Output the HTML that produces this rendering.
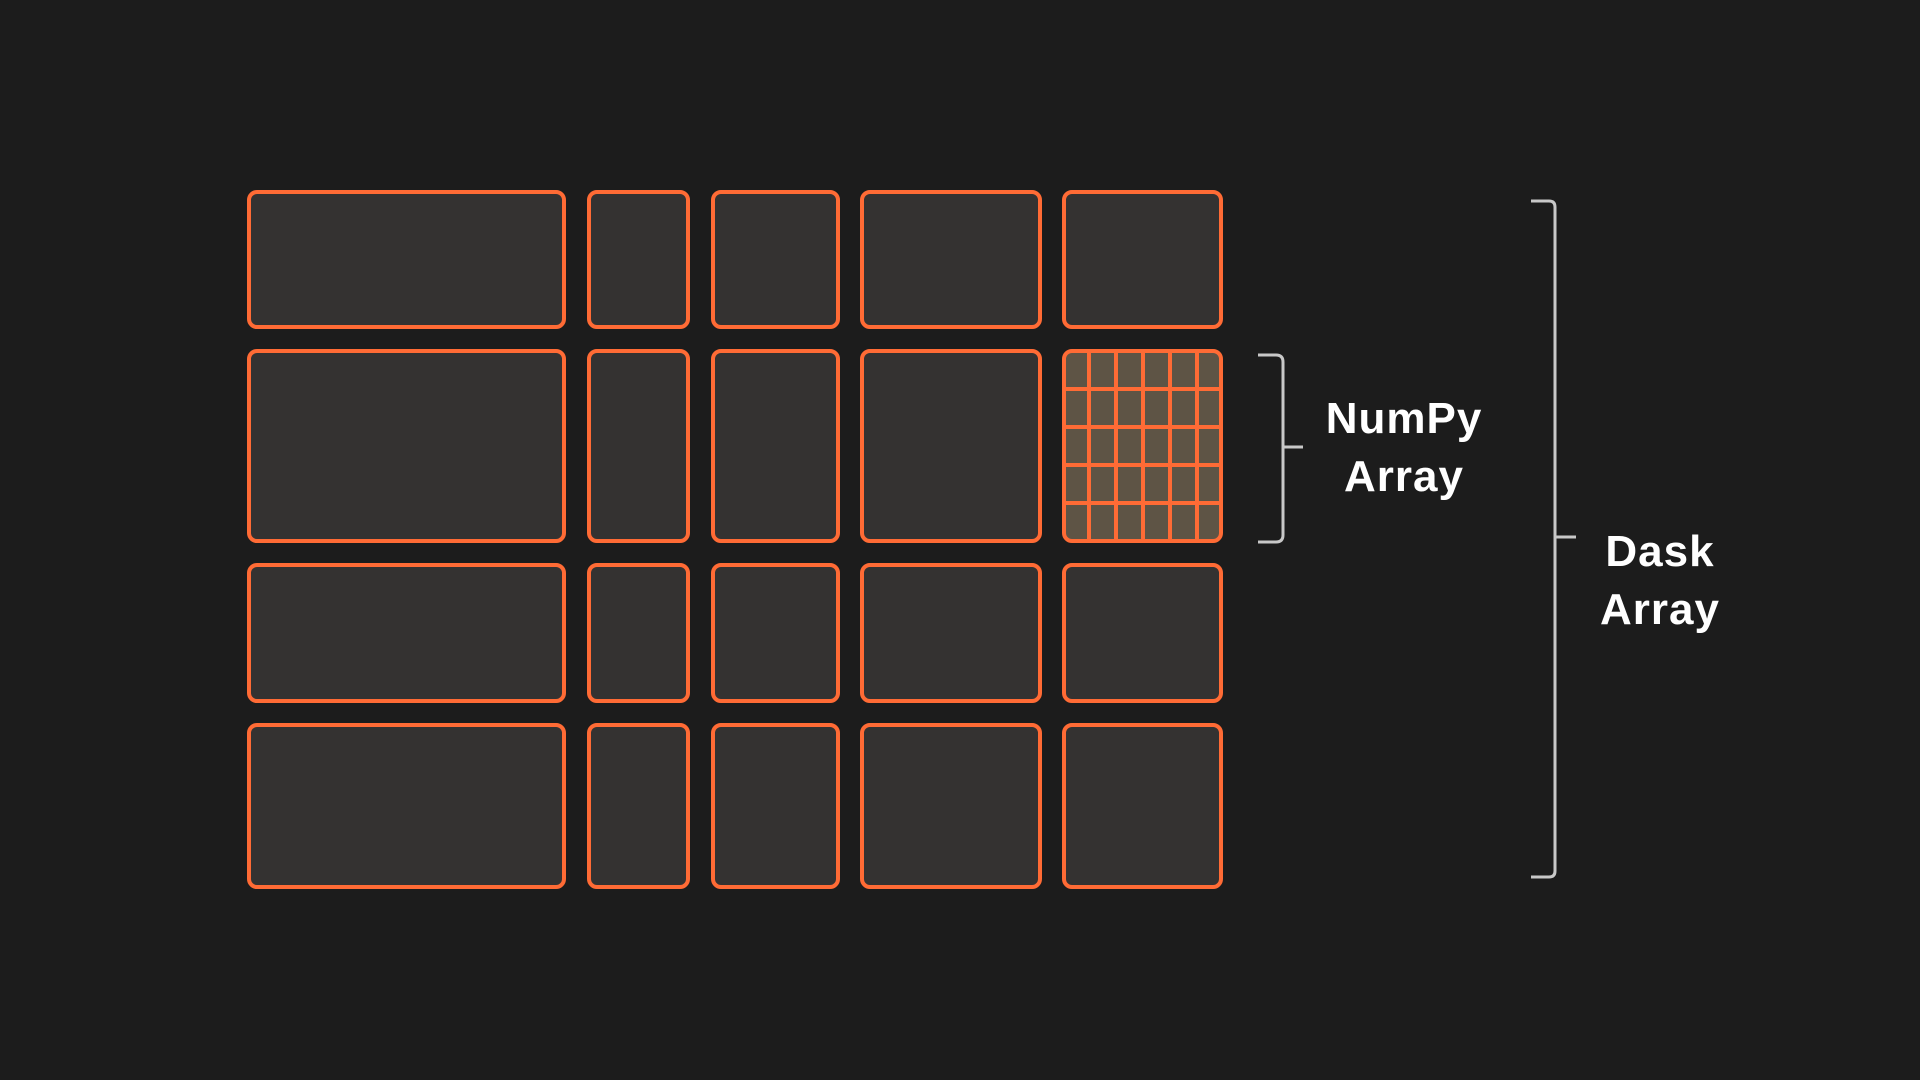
<!DOCTYPE html>
<html><head><style>
html,body{margin:0;padding:0;background:#1c1c1c;width:1920px;height:1080px;overflow:hidden}
.t{position:absolute;color:#fff;font-family:"Liberation Sans",sans-serif;font-size:44px;font-weight:bold;letter-spacing:1px;text-align:center;width:300px;line-height:1}
</style></head><body>
<svg width="1920" height="1080" style="position:absolute;left:0;top:0">
<g fill="#343231" stroke="#ff6b35" stroke-width="4">
<rect x="249" y="192" width="315" height="135" rx="8"/>
<rect x="589" y="192" width="99" height="135" rx="8"/>
<rect x="713" y="192" width="125" height="135" rx="8"/>
<rect x="862" y="192" width="178" height="135" rx="8"/>
<rect x="1064" y="192" width="157" height="135" rx="8"/>

<rect x="249" y="351" width="315" height="190" rx="8"/>
<rect x="589" y="351" width="99" height="190" rx="8"/>
<rect x="713" y="351" width="125" height="190" rx="8"/>
<rect x="862" y="351" width="178" height="190" rx="8"/>

<rect x="249" y="565" width="315" height="136" rx="8"/>
<rect x="589" y="565" width="99" height="136" rx="8"/>
<rect x="713" y="565" width="125" height="136" rx="8"/>
<rect x="862" y="565" width="178" height="136" rx="8"/>
<rect x="1064" y="565" width="157" height="136" rx="8"/>

<rect x="249" y="725" width="315" height="162" rx="8"/>
<rect x="589" y="725" width="99" height="162" rx="8"/>
<rect x="713" y="725" width="125" height="162" rx="8"/>
<rect x="862" y="725" width="178" height="162" rx="8"/>
<rect x="1064" y="725" width="157" height="162" rx="8"/>

<rect x="1064" y="351" width="157" height="190" rx="8" fill="#5e5445"/>
</g>
<g stroke="#ff6b35" stroke-width="4">
<line x1="1089" y1="351" x2="1089" y2="541"/>
<line x1="1116" y1="351" x2="1116" y2="541"/>
<line x1="1143" y1="351" x2="1143" y2="541"/>
<line x1="1170" y1="351" x2="1170" y2="541"/>
<line x1="1197" y1="351" x2="1197" y2="541"/>
<line x1="1064" y1="389" x2="1221" y2="389"/>
<line x1="1064" y1="427" x2="1221" y2="427"/>
<line x1="1064" y1="465" x2="1221" y2="465"/>
<line x1="1064" y1="503" x2="1221" y2="503"/>
</g>
<g fill="none" stroke="#c8c8c8" stroke-width="3">
<path d="M1258 355 H1276 Q1283 355 1283 362 V535 Q1283 542 1276 542 H1258"/>
<path d="M1283 447 H1303"/>
<path d="M1531 201 H1549 Q1555 201 1555 207 V871 Q1555 877 1549 877 H1531"/>
<path d="M1555 537 H1576"/>
</g>
</svg>
<div class="t" style="left:1254px;top:397px">NumPy</div>
<div class="t" style="left:1254px;top:455px">Array</div>
<div class="t" style="left:1510px;top:530px">Dask</div>
<div class="t" style="left:1510px;top:588px">Array</div>
</body></html>
